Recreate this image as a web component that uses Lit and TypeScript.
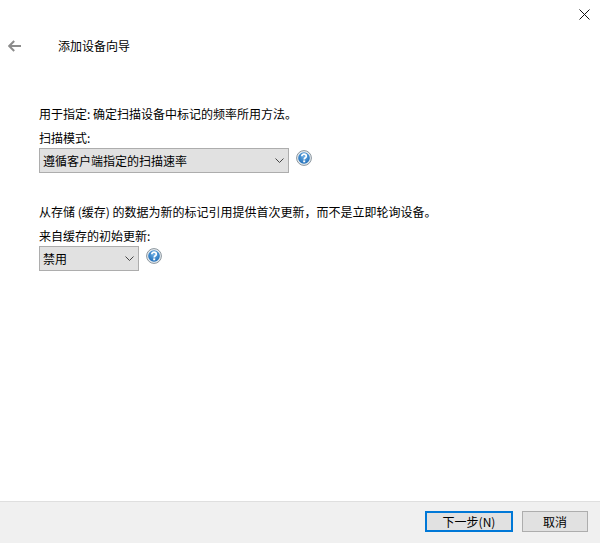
import { LitElement, html, css } from "lit";
import { customElement } from "lit/decorators.js";

const chevron = html`<svg class="chev" width="9" height="5" viewBox="0 0 9 5"><path d="M0.5 0.5 L4.5 4.5 L8.5 0.5" fill="none" stroke="#444" stroke-width="1"/></svg>`;
const help = html`<svg class="help" width="16" height="16" viewBox="0 0 16 16">
  <defs><radialGradient id="hg" cx="50%" cy="35%" r="65%"><stop offset="0" stop-color="#6fb0e6"/><stop offset="1" stop-color="#1f6db8"/></radialGradient></defs>
  <circle cx="8" cy="8" r="7.4" fill="#e8eef2" stroke="#8a949c" stroke-width="1"/>
  <circle cx="8" cy="8" r="5.8" fill="url(#hg)"/>
  <path d="M5.8 6.3 C5.8 4.8 6.9 4.2 8 4.2 C9.4 4.2 10.3 5 10.3 6.2 C10.3 7.7 8.2 7.8 8.2 9.4" fill="none" stroke="#fff" stroke-width="1.7"/>
  <rect x="7.2" y="10.4" width="2" height="1.9" fill="#fff"/>
</svg>`;

@customElement("app-root")
export class AppRoot extends LitElement {
  static styles = css`
    :host {
      display: flex;
      flex-direction: column;
      width: 600px;
      height: 543px;
      background: #fff;
      color: #000;
      font-family: "Noto Sans CJK SC", "Noto Sans", sans-serif;
      font-size: 12px;
      line-height: 16px;
      overflow: hidden;
      position: relative;
    }
    .close { position: absolute; left: 579px; top: 9px; width: 11px; height: 11px; }
    .head { display: flex; align-items: center; height: 16px; margin-top: 38px; padding-left: 8px; }
    .back { width: 14px; height: 12px; margin-right: 36px; }
    .body { flex: 1; padding: 52px 0 0 39px; display: flex; flex-direction: column; }
    .gap-label { margin-top: 8px; }
    .row { display: flex; align-items: flex-start; gap: 7px; margin-top: 2px; }
    .select {
      box-sizing: border-box;
      height: 25px;
      background: #e1e1e1;
      border: 1px solid #adadad;
      display: flex;
      align-items: center;
      justify-content: space-between;
      padding: 0 4px 0 3px;
    }
    .wide { width: 250px; }
    .narrow { width: 100px; }
    .help { margin-top: 2px; }
    .para2 { margin-top: 31px; }
    .foot {
      box-sizing: border-box;
      height: 42px;
      background: #f0f0f0;
      border-top: 1px solid #dfdfdf;
      display: flex;
      justify-content: flex-end;
      gap: 9px;
      padding: 9px 12px 0 0;
    }
    .btn {
      box-sizing: border-box;
      height: 21px;
      background: #e1e1e1;
      border: 1px solid #adadad;
      display: flex;
      align-items: center;
      justify-content: center;
    }
    .next { width: 88px; border: 2px solid #0078d7; }
    .cancel { width: 66px; }
  `;
  render() {
    return html`
      <svg class="close" viewBox="0 0 11 11"><path d="M0.5 0.5 L10.5 10.5 M10.5 0.5 L0.5 10.5" stroke="#111" stroke-width="1" fill="none"/></svg>
      <div class="head">
        <svg class="back" viewBox="0 0 14 12"><path d="M13 6 H2 M6.2 1 L1.2 6 L6.2 11" fill="none" stroke="#8c8c8c" stroke-width="2"/></svg>
        <span>添加设备向导</span>
      </div>
      <div class="body">
        <div>用于指定: 确定扫描设备中标记的频率所用方法。</div>
        <div class="gap-label">扫描模式:</div>
        <div class="row">
          <div class="select wide"><span>遵循客户端指定的扫描速率</span>${chevron}</div>
          ${help}
        </div>
        <div class="para2">从存储 (缓存) 的数据为新的标记引用提供首次更新，而不是立即轮询设备。</div>
        <div class="gap-label">来自缓存的初始更新:</div>
        <div class="row">
          <div class="select narrow"><span>禁用</span>${chevron}</div>
          ${help}
        </div>
      </div>
      <div class="foot">
        <div class="btn next">下一步(N)</div>
        <div class="btn cancel">取消</div>
      </div>
    `;
  }
}
